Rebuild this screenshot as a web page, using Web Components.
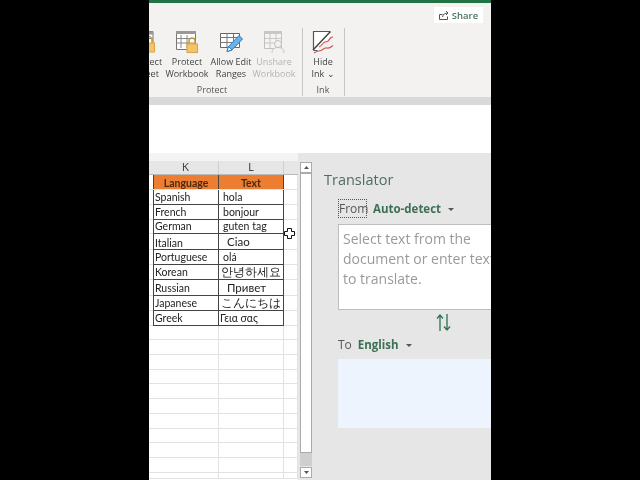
<!DOCTYPE html>
<html>
<head>
<meta charset="utf-8">
<title>Translator</title>
<style>
  html, body { margin: 0; background: #000; }
  body { width: 640px; height: 480px; overflow: hidden; }
</style>
</head>
<body>
<excel-stage>
  <excel-ribbon slot="ribbon">
    <ribbon-group label="Protect" style="margin-left:-27px">
      <ribbon-btn icon="sheet" style="width:36px">Protect<br>Sheet</ribbon-btn>
      <ribbon-btn icon="workbook" style="width:44px">Protect<br>Workbook</ribbon-btn>
      <ribbon-btn icon="edit" style="width:44px">Allow Edit<br>Ranges</ribbon-btn>
      <ribbon-btn icon="unshare" style="width:42px" disabled>Unshare<br>Workbook</ribbon-btn>
    </ribbon-group>
    <ribbon-group label="Ink" style="padding:0 4px 0 3px">
      <ribbon-btn icon="ink" style="width:34px">Hide<br>Ink ⌄</ribbon-btn>
    </ribbon-group>
    <share-button>Share</share-button>
  </excel-ribbon>
  <work-area>
    <sheet-grid slot="sheet">
      <sheet-row kind="head" h="14"><span>K</span><span slot="b">L</span></sheet-row>
      <sheet-row kind="title" h="15"><span>Language</span><span slot="b">Text</span></sheet-row>
      <sheet-row kind="data" h="15" pad="4"><span>Spanish</span><span slot="b">hola</span></sheet-row>
      <sheet-row kind="data" h="15" pad="4"><span>French</span><span slot="b">bonjour</span></sheet-row>
      <sheet-row kind="data" h="14" pad="4"><span>German</span><span slot="b">guten tag</span></sheet-row>
      <sheet-row kind="data" h="16" pad="8" lh="19" big><span>Italian</span><span slot="b">Ciao</span></sheet-row>
      <sheet-row kind="data" h="15" pad="4"><span>Portuguese</span><span slot="b">olá</span></sheet-row>
      <sheet-row kind="data" h="15" pad="2" big><span>Korean</span><span slot="b">안녕하세요</span></sheet-row>
      <sheet-row kind="data" h="16" pad="8" lh="17" big><span>Russian</span><span slot="b">Привет</span></sheet-row>
      <sheet-row kind="data" h="15" pad="2" big><span>Japanese</span><span slot="b">こんにちは</span></sheet-row>
      <sheet-row kind="data" h="15" pad="1"><span>Greek</span><span slot="b">Γεια σας</span></sheet-row>
      <sheet-row h="14"></sheet-row><sheet-row h="15"></sheet-row><sheet-row h="15"></sheet-row>
      <sheet-row h="14"></sheet-row><sheet-row h="15"></sheet-row><sheet-row h="15"></sheet-row>
      <sheet-row h="15"></sheet-row><sheet-row h="14"></sheet-row><sheet-row h="15"></sheet-row>
      <sheet-row h="15"></sheet-row><sheet-row h="6"></sheet-row>
      <svg class="cursor" width="11" height="11" viewBox="0 0 11 11" style="position:absolute;left:135px;top:75px"><path d="M3.500.500h4v3h3v4h-3v3h-4v-3h-3v-4h3z" fill="#fff" stroke="#111"/></svg>
    </sheet-grid>
    <sheet-scroll slot="sheet"></sheet-scroll>
    <translator-pane slot="pane"></translator-pane>
  </work-area>
</excel-stage>

<script>
const ICONS = {
  sheet: `<svg width="34" height="24" viewBox="0 0 34 24"><path d="M3 1.500h20v17H3z" fill="#fff" stroke="#777"/><path d="M3 1.500h20v3H3z" fill="#999"/><path d="M3 8.500h20M3 13.500h20M10 2v16M17 2v16" stroke="#888"/><path d="M15 13v-3a3.500 3.500 0 0 1 7 0v3" fill="none" stroke="#c79a3c" stroke-width="1.500"/><rect x="12.500" y="13" width="12" height="9" fill="#f5c469" stroke="#d9a445"/></svg>`,
  workbook: `<svg width="24" height="24" viewBox="0 0 24 24"><path d="M1.500 2.500h19v16l-3 1h-16z" fill="#fff" stroke="#777"/><path d="M1 1h20v3H1z" fill="#999"/><path d="M6 5v13M12 5v13M2 8.500h18M2 13h18" stroke="#888"/><path d="M14 14v-3a3 3 0 0 1 6 0v3" fill="none" stroke="#c79a3c" stroke-width="1.500"/><rect x="12" y="14" width="10.500" height="8.500" fill="#f5c469" stroke="#d9a445"/></svg>`,
  edit: `<svg width="25" height="24" viewBox="0 0 25 24"><path d="M1.500 3.500h19v14h-19z" fill="#fff" stroke="#666"/><path d="M1 7.500h20M1 12.500h20M8 4v13M14.500 4v13" stroke="#777"/><path d="M8 21.500l1.500-5L20 5.500l3.500 3.500L13 20z" fill="#6fb1e4" stroke="#2b7cbd"/><path d="M8 21.500l1.500-5 3.500 3.500z" fill="#fff" stroke="#2b7cbd"/></svg>`,
  unshare: `<svg width="24" height="24" viewBox="0 0 24 24"><g opacity=".4"><path d="M2.500 2.500h17v16h-17z" fill="#f8f8f8" stroke="#777"/><path d="M2 1h18v3H2z" fill="#888"/><path d="M8 4v14M14 4v14M3 8.500h16M3 13h16" stroke="#888"/><circle cx="16" cy="14" r="3.500" fill="#f3f2f1" stroke="#777"/><path d="M10 23c0-4 2.500-5.500 6-5.500s6 1.500 6 5.500" fill="#f3f2f1" stroke="#777"/></g></svg>`,
  ink: `<svg width="24" height="24" viewBox="0 0 24 24"><path d="M2.500 20V1.500H19" fill="#fff" stroke="#555" stroke-width="1.200"/><path d="M2.500 20h5L19.500 6V1.500z" fill="#fff"/><path d="M2 20L19.500 1.500" stroke="#444" stroke-width="1.500"/><path d="M2.500 20.500h4" stroke="#555"/><path d="M8 17c3-1 3-4 6-5s3 0 4-2 2-3 4-3" fill="none" stroke="#d9534f" stroke-width="1.200"/><path d="M3 23c3-2 5-2 7-2.500s3-3 6-2.500 4-1 6-2.500" fill="none" stroke="#d9534f" stroke-width="1.200"/></svg>`
};

class ExcelStage extends HTMLElement {
  constructor() {
    super();
    this.attachShadow({ mode: "open" }).innerHTML = `
      <style>
        :host { display: flex; flex-direction: column; width: 342px; height: 480px; margin-left: 149px;
                overflow: hidden; background: #e6e6e6; font-family: "Open Sans", "Liberation Sans", sans-serif; filter: blur(0.35px); }
        .green { height: 3px; background: #217346; flex: none; }
        .band { height: 8px; flex: none; background: #d9d9d9; }
        .blank { height: 48px; flex: none; background: #fff; }
      </style>
      <div class="green"></div>
      <slot name="ribbon"></slot>
      <div class="band"></div>
      <div class="blank"></div>
      <slot></slot>
    `;
  }
}

class ExcelRibbon extends HTMLElement {
  constructor() {
    super();
    this.attachShadow({ mode: "open" }).innerHTML = `
      <style>
        :host { display: flex; height: 94px; flex: none; background: #f3f2f1; position: relative; padding-top: 25px; box-sizing: border-box; }
      </style>
      <slot></slot>
    `;
  }
}

class RibbonGroup extends HTMLElement {
  constructor() {
    super();
    this.attachShadow({ mode: "open" }).innerHTML = `
      <style>
        :host { display: flex; flex-direction: column; height: 68px; border-right: 1px solid #c8c6c4; box-sizing: border-box; padding: 0 7px 0 7px; }
        .btns { display: flex; flex: 1; padding-top: 2px; }
        .label { font-size: 9px; line-height: 12px; color: #555; text-align: center; }
      </style>
      <div class="btns"><slot></slot></div>
      <div class="label"></div>
    `;
  }
  connectedCallback() {
    this.shadowRoot.querySelector(".label").textContent = this.getAttribute("label");
  }
}

class RibbonBtn extends HTMLElement {
  constructor() {
    super();
    this.attachShadow({ mode: "open" }).innerHTML = `
      <style>
        :host { display: flex; flex-direction: column; align-items: center; flex: none; font-size: 9px; line-height: 12px; color: #444; text-align: center; white-space: nowrap; }
        :host([disabled]) { color: #b4b4b4; }
        .icon { height: 26px; display: flex; align-items: flex-start; justify-content: center; }
        svg { display: block; }
      </style>
      <div class="icon"></div>
      <div><slot></slot></div>
    `;
  }
  connectedCallback() {
    this.shadowRoot.querySelector(".icon").innerHTML = ICONS[this.getAttribute("icon")] || "";
  }
}

class ShareButton extends HTMLElement {
  constructor() {
    super();
    this.attachShadow({ mode: "open" }).innerHTML = `
      <style>
        :host { position: absolute; right: 8px; top: 4px; width: 49px; height: 16px; background: #fff; display: flex; align-items: center;
                justify-content: center; gap: 3px; font-size: 9.500px; font-weight: 600; color: #4a7463; }
      </style>
      <svg width="10" height="10" viewBox="0 0 10 10" fill="none" stroke="#555"><path d="M.500 4.500h3M.500 4.500v5h8v-3M3.500 7C4 4 6 3 9 3M7 1l2 2-2 2"/></svg>
      <slot></slot>
    `;
  }
}

class WorkArea extends HTMLElement {
  constructor() {
    super();
    this.attachShadow({ mode: "open" }).innerHTML = `
      <style>
        :host { display: flex; flex: 1; min-height: 0; }
      </style>
      <slot name="sheet"></slot>
      <slot name="pane"></slot>
    `;
  }
}

class SheetGrid extends HTMLElement {
  constructor() {
    super();
    this.attachShadow({ mode: "open" }).innerHTML = `
      <style>
        :host { display: block; position: relative; width: 149px; flex: none; background: #fff; overflow: hidden; height: 327px; font-family: "Lato", "Liberation Sans", sans-serif; }
        .gap { height: 8px; background: #f4f4f4; }
      </style>
      <div class="gap"></div>
      <slot></slot>
    `;
  }
}

class SheetRow extends HTMLElement {
  constructor() {
    super();
    this.attachShadow({ mode: "open" }).innerHTML = `
      <style>
        :host { display: grid; grid-template-columns: 4px 66px 65px 14px; grid-template-rows: minmax(0, 1fr); box-sizing: border-box; height: 15px; border-bottom: 1px solid #e2e2e2; font-size: 10.500px; color: #222; }
        .c { border-right: 1px solid #e2e2e2; white-space: nowrap; overflow: hidden; line-height: 14px; padding-left: 2px; }
        .m { border-right: 1px solid #e2e2e2; }
        :host([kind=head]) { background: #e6e6e6; border-color: #bbb; text-align: center; color: #444; }
        :host([kind=head]) .c { border-color: #d0d0d0; padding: 0; }
        :host([kind=head]) .m { border: 0; }
        :host([kind=title]) { font-weight: 700; color: #4a2a10; text-align: center; }
        :host([kind=title]) .c { background: #ed7d31; border-right: 1px solid #444; padding: 0; line-height: 16px !important; }
        :host([kind=title]) .a { border-left: 1px solid #444; }
        :host([kind=data]) .c { border-right: 1px solid #444; border-bottom: 1px solid #444; margin-bottom: -1px; }
        :host([kind=data]) .a { border-left: 1px solid #444; padding-left: 1px; }
        :host([big]) .b { font-size: 11.500px; }
      </style>
      <div class="lead"></div>
      <div class="c a"><slot></slot></div>
      <div class="c b"><slot name="b"></slot></div>
      <div class="m"></div>
    `;
  }
  connectedCallback() {
    const h = this.getAttribute("h");
    if (h) {
      this.style.height = h + "px";
      this.shadowRoot.querySelectorAll(".c").forEach(c => c.style.lineHeight = (h - 1) + "px");
    }
    const pad = this.getAttribute("pad");
    if (pad) this.shadowRoot.querySelector(".b").style.paddingLeft = pad + "px";
    // left cell sits a little lower in some rows
    const lh = this.getAttribute("lh");
    if (lh) this.shadowRoot.querySelector(".a").style.lineHeight = lh + "px";
  }
}

class SheetScroll extends HTMLElement {
  constructor() {
    super();
    this.attachShadow({ mode: "open" }).innerHTML = `
      <style>
        :host { display: flex; flex-direction: column; width: 15px; padding: 9px 1px 1px 2px; box-sizing: border-box; flex: none; background: #e6e6e6; height: 327px; }
        .btn { height: 11px; width: 12px; background: #fff; border: 1px solid #aaa; box-sizing: border-box; flex: none; display: flex; align-items: center; justify-content: center; }
        .thumb { height: 280px; width: 12px; background: #fff; border: 1px solid #aaa; box-sizing: border-box; flex: none; }
        .track { height: 13px; width: 12px; background: #cfcfcf; flex: none; margin-bottom: 1px; }
        svg { display: block; }
      </style>
      <div class="btn"><svg width="5" height="3"><path d="M0 3l2.500-3L5 3z" fill="#555"/></svg></div>
      <div class="thumb"></div>
      <div class="track"></div>
      <div class="btn"><svg width="5" height="3"><path d="M0 0l2.500 3L5 0z" fill="#555"/></svg></div>
    `;
  }
}

class TranslatorPane extends HTMLElement {
  constructor() {
    super();
    this.attachShadow({ mode: "open" }).innerHTML = `
      <style>
        :host { display: flex; flex-direction: column; flex: none; width: 178px; height: 327px; box-sizing: border-box; padding: 17px 0 0 11px; background: #e6e6e6;
                font-family: "Open Sans", "Liberation Sans", sans-serif; color: #555; overflow: hidden; }
        .title { font-size: 14.500px; line-height: 20px; color: #4d6e60; }
        .body { margin: 9px 0 0 14px; display: flex; flex-direction: column; width: 180px; }
        .line { display: flex; align-items: center; height: 19px; font-size: 12px; gap: 6px; }
        .from { border: 1px dotted #555; height: 19px; box-sizing: border-box; width: 29px; line-height: 17px; }
        .lang { font-weight: 700; font-size: 11.500px; color: #3c7054; }
        .caret { display: inline-block; width: 0; height: 0; margin-left: 7px; vertical-align: 2px; border: 3px solid transparent; border-top: 3px solid #555; border-bottom: 0; }
        .input { margin-top: 6px; height: 86px; box-sizing: border-box; background: #fff; border: 1px solid #bdbdbd; border-right: 0; padding: 4px 0 0 4px;
                 font-size: 14px; line-height: 20px; color: #9a9a9a; white-space: pre; }
        .swap { height: 25px; display: flex; align-items: center; padding-left: 98px; flex: none; }
        .out { margin-top: 5px; height: 69px; background: #eef4fd; }
      </style>
      <div class="title">Translator</div>
      <div class="body">
        <div class="line"><span class="from">From</span><span class="lang">Auto-detect<i class="caret"></i></span></div>
        <div class="input">Select text from the
document or enter text
to translate.</div>
        <div class="swap"><svg width="15" height="17" viewBox="0 0 15 17" fill="none" stroke="#2f7050" stroke-width="1.300"><path d="M4 17V1M1 4.500L4 1l3 3.500M11 0v16M8 12.500l3 3.500 3-3.500"/></svg></div>
        <div class="line"><span>To</span><span class="lang">English<i class="caret"></i></span></div>
        <div class="out"></div>
      </div>
    `;
  }
}

customElements.define("excel-stage", ExcelStage);
customElements.define("excel-ribbon", ExcelRibbon);
customElements.define("ribbon-group", RibbonGroup);
customElements.define("ribbon-btn", RibbonBtn);
customElements.define("share-button", ShareButton);
customElements.define("work-area", WorkArea);
customElements.define("sheet-grid", SheetGrid);
customElements.define("sheet-row", SheetRow);
customElements.define("sheet-scroll", SheetScroll);
customElements.define("translator-pane", TranslatorPane);
</script>
</body>
</html>
